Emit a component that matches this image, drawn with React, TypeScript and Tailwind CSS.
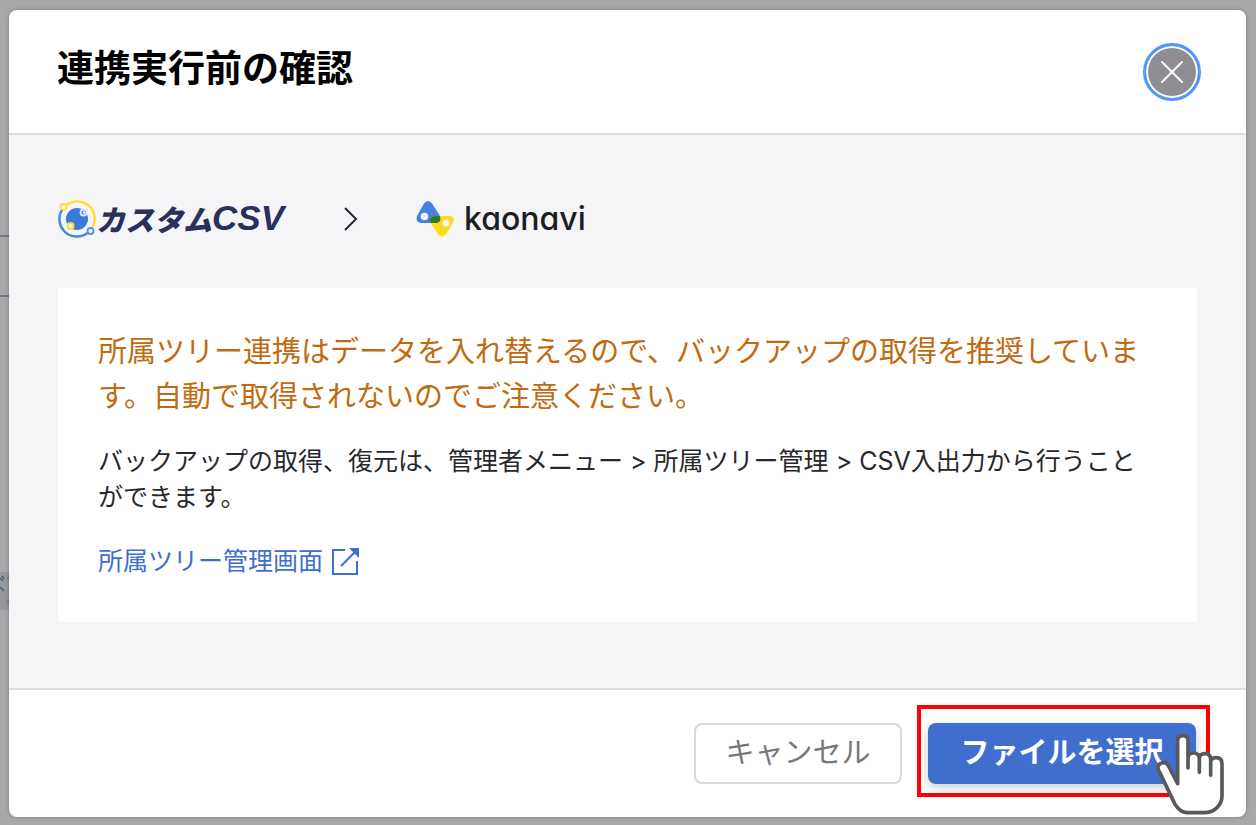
import React from 'react';

const CloseIcon: React.FC = () => (
  <svg viewBox="0 0 24 24" className="size-6" fill="none" stroke="currentColor" strokeWidth="2" strokeLinecap="round" aria-hidden="true">
    <path d="M2 2l20 20M22 2L2 22" />
  </svg>
);

const ChevronIcon: React.FC = () => (
  <svg viewBox="0 0 14 24" className="h-6 w-3.5" fill="none" stroke="#26282c" strokeWidth="2" aria-hidden="true">
    <path d="M1 1l11 11L1 23" />
  </svg>
);

const ExternalLinkIcon: React.FC = () => (
  <svg viewBox="0 0 28 28" className="mt-1 size-7 shrink-0" fill="none" stroke="currentColor" strokeWidth="2" aria-hidden="true">
    <path d="M14 3H2v24h24V14M10 19L24 5" />
    <path d="M18 1h10v10z" fill="currentColor" stroke="none" />
  </svg>
);

const CustomCsvLogo: React.FC = () => (
  <div className="flex items-center" role="img" aria-label="カスタムCSV">
    <svg viewBox="0 0 38 38" className="size-[38px] shrink-0 overflow-visible" fill="none" aria-hidden="true">
      <path d="M7 6.300A17.500 17.500 0 0 1 33.300 29.200" stroke="#ffdc2e" strokeWidth="2.4" />
      <path d="M4.400 9.300A17.500 17.500 0 0 0 29.500 33" stroke="#4a83e0" strokeWidth="2.4" />
      <circle cx="19" cy="19" r="11" fill="#3d78db" />
      <circle cx="5.500" cy="7" r="3" fill="#f5f5f8" stroke="#ffdc2e" strokeWidth="1.800" />
      <circle cx="25.500" cy="12.500" r="3" fill="#3d78db" stroke="#dce8fb" strokeWidth="1.800" />
      <circle cx="26" cy="12.500" r="1.200" fill="#fff" />
      <circle cx="12.500" cy="26" r="3" fill="#f5f5f8" stroke="#ffdc2e" strokeWidth="2" />
      <circle cx="32.500" cy="31" r="3" fill="#f5f5f8" stroke="#5b90e6" strokeWidth="1.800" />
    </svg>
    <span className="flex items-center pb-0.5 font-black italic text-[#2a2f5b]">
      <span className="text-[29px] leading-9">カスタム</span>
      <span className="font-['Liberation_Sans',sans-serif] text-[35px] leading-9">CSV</span>
    </span>
  </div>
);

const KaonaviLogo: React.FC = () => (
  <div className="flex items-center gap-2.5">
    <svg viewBox="0 0 38 38" className="size-[38px] shrink-0 overflow-visible" aria-hidden="true">
      <path d="M8 3.500Q12-1.500 16 3.500L24 16Q26 23 20 23H5Q-1 22 1 16Z" fill="#4580e2" />
      <path d="M19 16H34Q39 17 37.500 22L30 34Q26 39 22 34L14 22Q13 17 19 16Z" fill="#ffdc1a" />
      <path d="M19 16H24Q26 23 20 23H14.500Q12 17 19 16Z" fill="#2f7b1c" />
      <circle cx="8.500" cy="16.500" r="3.800" fill="#f5f5f8" />
      <circle cx="30" cy="23" r="3.600" fill="#f5f5f8" />
    </svg>
    <span className="font-['Inter',sans-serif] text-[32px] leading-9 font-medium text-[#1c1e22] [font-feature-settings:'cv11'_1]">
      kaonavi
    </span>
  </div>
);

const PointerHand: React.FC = () => (
  <svg viewBox="768 128 207 249" className="pointer-events-none absolute top-2.5 left-[228px] h-[83px] w-[69px]" aria-hidden="true">
    <path
      d="M833 280V151Q833 136 849 136Q864 136 864 151V233V206Q864 188 880 188Q898 188 898 205V246V205Q898 190 915 190Q932 190 932 208V255V216Q932 202 948 202Q966 202 966 220V316C966 345 942 367 912 367H862C842 367 832 353 824 340L778 244Q768 227 782 219Q797 213 805 226Z"
      fill="#fff"
      stroke="#595959"
      strokeWidth="11"
      strokeLinejoin="round"
    />
  </svg>
);

// Dimmed page that stays visible along the left edge of the dialog
const Backdrop: React.FC = () => (
  <div className="absolute inset-0 overflow-hidden bg-[#a7a8aa]" aria-hidden="true">
    <div className="mt-[235px] h-[62px] w-1/2 border-y-2 border-[#77787b]" />
    <div className="mt-[275px] h-[38px] w-1/2 bg-[#97989b]">
      <svg viewBox="0 0 9 38" className="h-[38px] w-[9px]" fill="none" stroke="#4c5f78" strokeWidth="1.5">
        <path d="M0 6l3 3M2 4l2 3M0 15l4 4" />
        <path d="M7 6h2M7 30h2" stroke="#8a6a50" />
      </svg>
    </div>
  </div>
);

const App: React.FC = () => {
  return (
    <div className="relative flex min-h-screen flex-col pt-2.5 pr-2.5 pb-2 pl-[9px] font-['Noto_Sans_CJK_JP',sans-serif]">
      <Backdrop />
      <div
        role="dialog"
        aria-labelledby="dialog-title"
        className="relative flex flex-1 flex-col overflow-hidden rounded-lg bg-white shadow-[0_0_4px_rgba(0,0,0,0.25)]"
      >
        <header className="flex items-start justify-between border-b-2 border-[#dcdde0] pt-[33px] pr-[45px] pb-8 pl-12">
          <h1 id="dialog-title" className="text-[37px] leading-[46px] font-bold text-black">
            連携実行前の確認
          </h1>
          <button
            type="button"
            aria-label="閉じる"
            className="flex size-[58px] items-center justify-center rounded-full border-[3px] border-[#4c9aff] bg-[#8e8d93] text-white ring-2 ring-white ring-inset"
          >
            <CloseIcon />
          </button>
        </header>

        <main className="flex-1 bg-[#f5f5f8] px-[49px] pt-16 pb-16">
          <div className="flex h-10 items-center">
            <CustomCsvLogo />
            <div className="mr-[58px] ml-[60px]">
              <ChevronIcon />
            </div>
            <KaonaviLogo />
          </div>

          <section className="mt-[49px] bg-white px-10 pt-[39px] pb-[45px]">
            <p className="text-[29px] leading-[45px] text-[#c16a10]">
              所属ツリー連携はデータを入れ替えるので、バックアップの取得を推奨しています。自動で取得されないのでご注意ください。
            </p>
            <p className="mt-[26px] font-['Inter','Noto_Sans_CJK_JP',sans-serif] text-[25px] leading-9 text-[#26282c]">
              バックアップの取得、復元は、管理者メニュー &gt; 所属ツリー管理 &gt; CSV入出力から行うことができます。
            </p>
            <a href="#" className="mt-[26px] flex items-center gap-2 text-[25px] leading-9 text-[#3f6ecd]">
              所属ツリー管理画面
              <ExternalLinkIcon />
            </a>
          </section>
        </main>

        <footer className="flex justify-end gap-[26px] border-t-2 border-[#dcdde0] pt-[33px] pr-[50px] pb-[33px]">
          <button
            type="button"
            className="h-[61px] w-[208px] rounded-lg border-2 border-[#d8d8da] bg-white pb-1.5 text-[29px] text-[#77787c]"
          >
            キャンセル
          </button>
          <div className="relative">
            <button
              type="button"
              className="h-[61px] w-[268px] rounded-lg bg-[#3f6ecd] pb-1.5 text-[29px] font-bold text-white shadow-[0_4px_12px_rgba(0,0,0,0.2)]"
            >
              ファイルを選択
            </button>
            <div className="pointer-events-none absolute -top-[18px] -right-3.5 -bottom-[13px] -left-[11px] border-4 border-[#ff0000]" />
            <PointerHand />
          </div>
        </footer>
      </div>
    </div>
  );
};

export default App;
